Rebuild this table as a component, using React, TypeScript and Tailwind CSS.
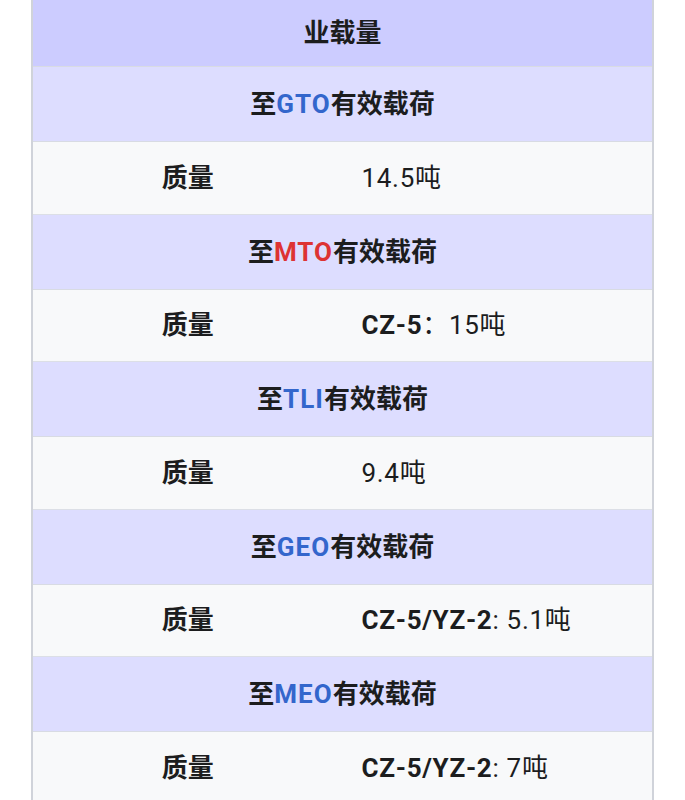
import React from "react";

const font = { fontFamily: "Roboto, 'Noto Sans CJK SC', sans-serif" };

type Sec = { orbit: string; color: string; bold?: string; sep?: string; value: string };

const secs: Sec[] = [
  { orbit: "GTO", color: "text-[#3366cc]", value: "14.5吨" },
  { orbit: "MTO", color: "text-[#dd3333]", bold: "CZ-5", sep: "：", value: "15吨" },
  { orbit: "TLI", color: "text-[#3366cc]", value: "9.4吨" },
  { orbit: "GEO", color: "text-[#3366cc]", bold: "CZ-5/YZ-2", sep: ": ", value: "5.1吨" },
  { orbit: "MEO", color: "text-[#3366cc]", bold: "CZ-5/YZ-2", sep: ": ", value: "7吨" },
];

export default function App() {
  return (
    <div className="w-[685px] h-[800px] bg-white overflow-hidden" style={font}>
      <div className="ml-[31px] w-[623px] border-x-2 border-[#d0d3da] text-[#1c1d1e] text-[26px] leading-none">
        <div className="h-[67px] bg-[#ccccff] border-b border-[#d8dbe3] flex items-center justify-center font-bold">
          业载量
        </div>
        {secs.map((s) => (
          <React.Fragment key={s.orbit}>
            <div className="h-[75px] bg-[#ddddff] border-b border-[#d8dbe3] flex items-center justify-center font-bold">
              <span>至</span>
              <span className={`${s.color} tracking-[1px]`}>{s.orbit}</span>
              <span>有效载荷</span>
            </div>
            <div className="h-[72.5px] bg-[#f8f9fa] border-b border-[#dcdfe6] flex items-center">
              <div className="w-1/2 text-center font-bold">质量</div>
              <div className="w-1/2 pl-[19px] tracking-[0.7px]">
                {s.bold && <span className="font-bold">{s.bold}</span>}
                {s.sep && <span>{s.sep}</span>}
                <span>{s.value}</span>
              </div>
            </div>
          </React.Fragment>
        ))}
      </div>
    </div>
  );
}
